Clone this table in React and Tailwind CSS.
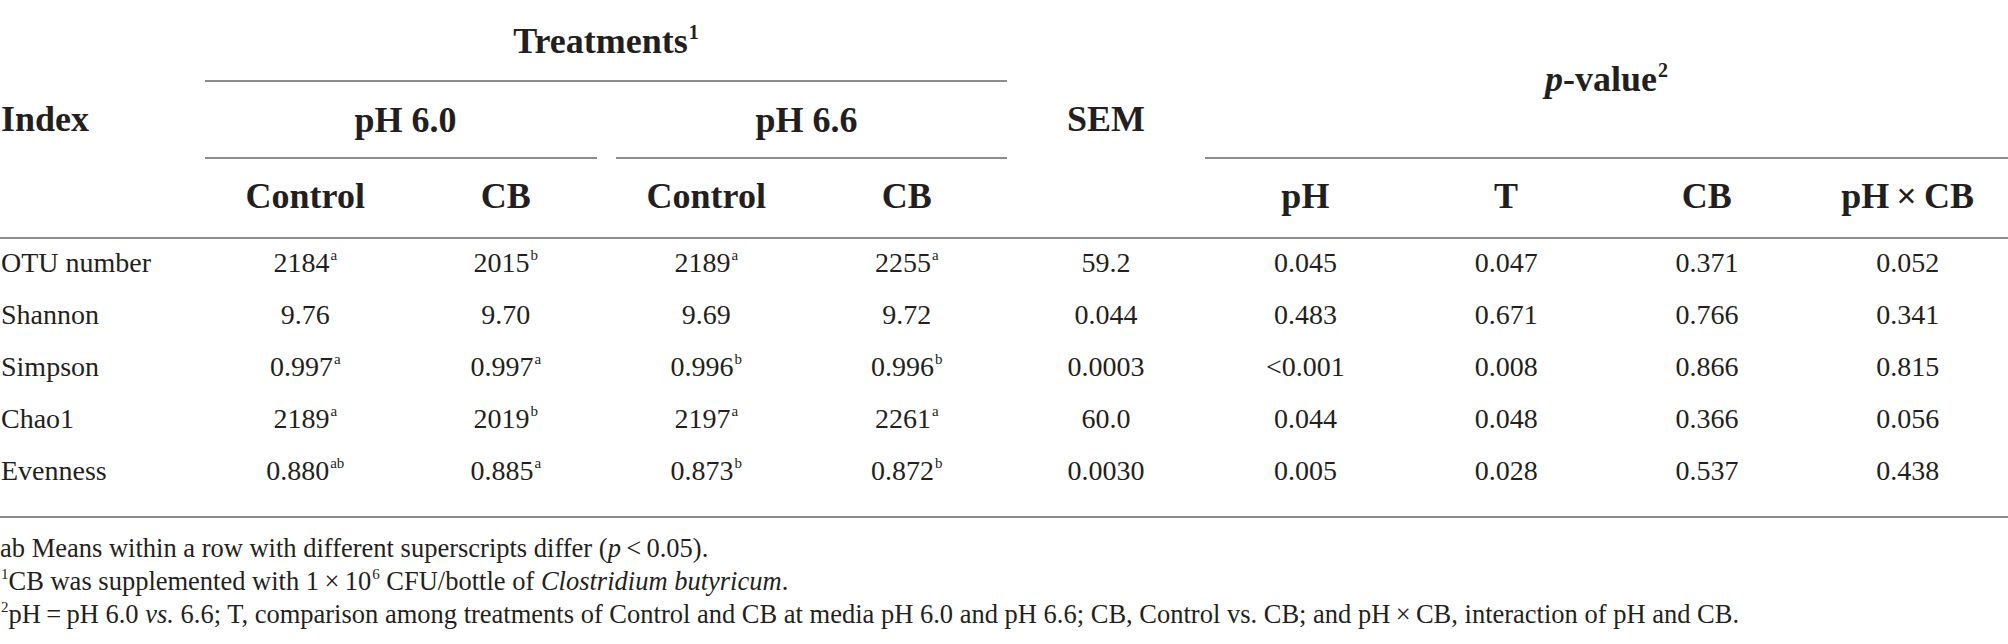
import React from 'react'

const serif = { fontFamily: '"Liberation Serif", "Times New Roman", serif' }

function Sup({ children }) {
  return <sup className="text-[15px] top-[-0.75em] ml-[1px]">{children}</sup>
}

function HeadSup({ children }) {
  return <sup className="text-[20px] top-[-0.7em] ml-[1px]">{children}</sup>
}

const rows = [
  { name: 'OTU number', vals: [['2184', 'a'], ['2015', 'b'], ['2189', 'a'], ['2255', 'a']], rest: ['59.2', '0.045', '0.047', '0.371', '0.052'] },
  { name: 'Shannon', vals: [['9.76'], ['9.70'], ['9.69'], ['9.72']], rest: ['0.044', '0.483', '0.671', '0.766', '0.341'] },
  { name: 'Simpson', vals: [['0.997', 'a'], ['0.997', 'a'], ['0.996', 'b'], ['0.996', 'b']], rest: ['0.0003', '<0.001', '0.008', '0.866', '0.815'] },
  { name: 'Chao1', vals: [['2189', 'a'], ['2019', 'b'], ['2197', 'a'], ['2261', 'a']], rest: ['60.0', '0.044', '0.048', '0.366', '0.056'] },
  { name: 'Evenness', vals: [['0.880', 'ab'], ['0.885', 'a'], ['0.873', 'b'], ['0.872', 'b']], rest: ['0.0030', '0.005', '0.028', '0.537', '0.438'] },
]

const cols = 'grid grid-cols-[205px_repeat(4,200.5px)_198px_repeat(4,1fr)]'
const line = 'h-[2px] bg-[#8c8c8c]'

export default function App() {
  return (
    <div className="w-[2008px] h-[644px] bg-white text-[#231f20] overflow-hidden" style={serif}>
      {/* header */}
      <div className={`${cols} grid-rows-[82px_77px_78px] font-bold text-[36px]`}>
        <div className="row-span-3 flex items-center pl-[1px]">Index</div>
        <div className="col-span-4 flex flex-col">
          <div className="flex-1 flex items-center justify-center pt-[2px]">
            <span>Treatments<HeadSup>1</HeadSup></span>
          </div>
          <div className={line} />
        </div>
        <div className="row-span-3 col-start-6 row-start-1 flex items-center justify-center">SEM</div>
        <div className="col-span-4 row-span-2 col-start-7 row-start-1 flex flex-col">
          <div className="flex-1 flex items-center justify-center">
            <span><i>p</i>-value<HeadSup>2</HeadSup></span>
          </div>
          <div className={line} />
        </div>
        <div className="col-span-2 col-start-2 row-start-2 flex flex-col">
          <div className="flex-1 flex items-center justify-center">pH 6.0</div>
          <div className={`${line} mr-[9px]`} />
        </div>
        <div className="col-span-2 col-start-4 row-start-2 flex flex-col">
          <div className="flex-1 flex items-center justify-center">pH 6.6</div>
          <div className={`${line} ml-[10px]`} />
        </div>
        {['Control', 'CB', 'Control', 'CB'].map((t, i) => (
          <div key={i} className="row-start-3 flex items-center justify-center pb-[4px]" style={{ gridColumnStart: i + 2 }}>{t}</div>
        ))}
        {['pH', 'T', 'CB', 'pH\u2009×\u2009CB'].map((t, i) => (
          <div key={i} className="row-start-3 flex items-center justify-center pb-[4px]" style={{ gridColumnStart: i + 7 }}>{t}</div>
        ))}
      </div>
      <div className={line} />

      {/* body */}
      <div className="pb-[17px] text-[28px]">
        {rows.map((r) => (
          <div key={r.name} className={`${cols} h-[52px] items-center pb-[5px]`}>
            <div className="pl-[1px]">{r.name}</div>
            {r.vals.map(([v, s], i) => (
              <div key={i} className="text-center">
                {v}{s && <Sup>{s}</Sup>}
              </div>
            ))}
            {r.rest.map((v, i) => (
              <div key={i} className="text-center">{v}</div>
            ))}
          </div>
        ))}
      </div>
      <div className={line} />

      {/* footnotes */}
      <div className="pt-[14px] text-[26.5px] leading-[33px]">
        <p>ab Means within a row with different superscripts differ (<i>p</i>{'\u2009<\u2009'}0.05).</p>
        <p><Sup>1</Sup>CB was supplemented with 1{'\u2009×\u2009'}10<Sup>6</Sup> CFU/bottle of <i>Clostridium butyricum</i>.</p>
        <p><Sup>2</Sup>pH{'\u2009=\u2009'}pH 6.0 <i>vs.</i> 6.6; T, comparison among treatments of Control and CB at media pH 6.0 and pH 6.6; CB, Control vs. CB; and pH{'\u2009×\u2009'}CB, interaction of pH and CB.</p>
      </div>
    </div>
  )
}
